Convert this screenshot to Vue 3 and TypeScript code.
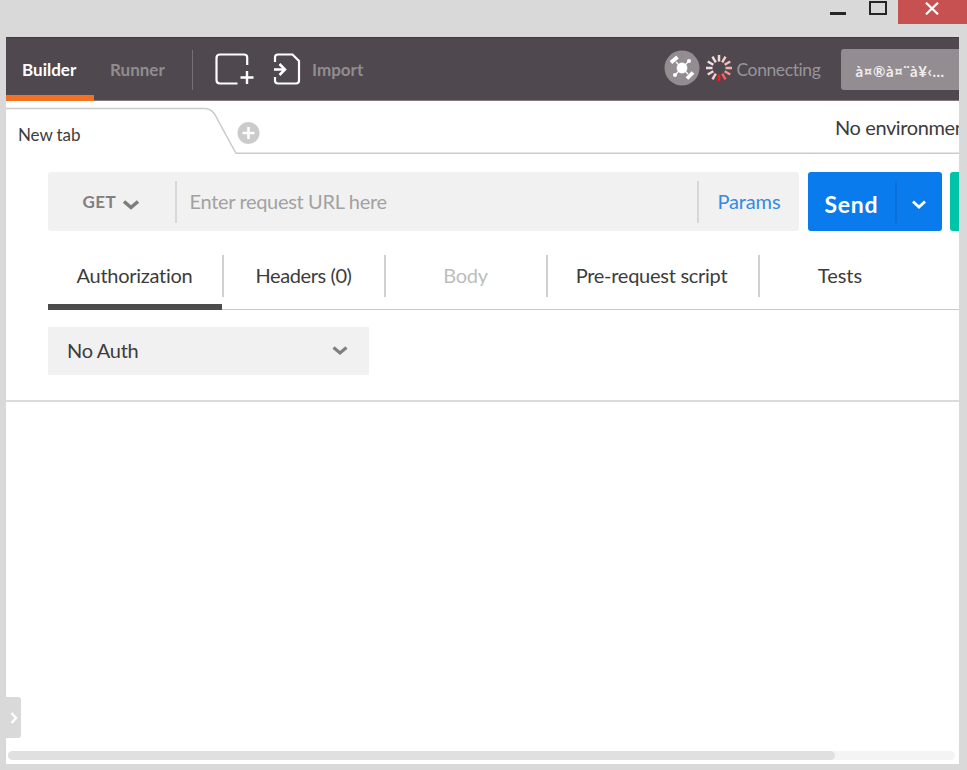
<script setup lang="ts">
import { ref } from 'vue'

interface Tab {
  label: string
  width: number
  cls: string
}

const tabs: Tab[] = [
  { label: 'Authorization', width: 174, cls: 'auth' },
  { label: 'Headers (0)', width: 162, cls: 'headers' },
  { label: 'Body', width: 162, cls: 'body' },
  { label: 'Pre-request script', width: 212, cls: 'script' },
  { label: 'Tests', width: 163, cls: 'tests' },
]
const active = ref(0)

const spokeColors = ['#ff1a1a', '#f3cccc', '#efd6d6', '#f2dede', '#f2e0e0', '#f0dede', '#f5d8d8', '#f7cccc', '#f5c0c0', '#f5b0b0', '#f49494', '#f06060']
const spokes = spokeColors.map((color, i) => ({ angle: 180 + i * 30, color }))
</script>

<template>
  <div class="window">
    <div class="titlebar">
      <svg class="min" width="16" height="16"><rect y="12" width="16" height="3" fill="#252525" /></svg>
      <svg class="max" width="18" height="16"><rect x="1" y="2" width="16" height="12" fill="none" stroke="#252525" stroke-width="2" /></svg>
      <div class="close">
        <svg width="14" height="13" viewBox="0 0 14 13"><path d="M1 .7 13 12.3M13 .7 1 12.3" stroke="#fff" stroke-width="2.200" /></svg>
      </div>
    </div>

    <div class="app">
      <header class="header">
        <div class="nav selected"><span class="t-builder">Builder</span></div>
        <div class="nav"><span class="t-runner">Runner</span></div>
        <i class="nav-line"></i>
        <svg class="new-icon" width="40" height="34" viewBox="0 0 40 34" fill="none" stroke="#fff" stroke-width="2.200">
          <path d="M22.500 30.500H5Q1.500 30.500 1.500 27V5Q1.500 1.500 5 1.500H29Q32.200 1.500 32.200 4.500V12" />
          <path d="M25.500 24.500H38.500M32 18V31" stroke-width="2.400" />
        </svg>
        <svg class="import-icon" width="28" height="34" viewBox="0 0 28 34" fill="none" stroke="#fff" stroke-width="2.200">
          <path d="M2 9V4.500Q2 1.500 5 1.500H19.500L26 8V27.500Q26 30.500 23 30.500H5Q2 30.500 2 27.500V24" />
          <path d="M1 16.500H11.500M6.500 11 12 16.500 6.500 22" stroke-width="2.500" />
        </svg>
        <span class="t-import">Import</span>
        <svg class="intercept" width="36" height="36" viewBox="0 0 36 36">
          <circle cx="18" cy="18" r="17.500" fill="#938d92" />
          <path d="M12 12 24 24M12 24 24 12" stroke="#fff" stroke-width="1.300" />
          <circle cx="18" cy="18" r="5.400" fill="#fff" />
          <circle cx="25" cy="11" r="2" fill="#fff" />
          <circle cx="11" cy="25" r="2" fill="#fff" />
          <path d="M7 12.500 13.500 7M23 28.500 29 22.500" stroke="#fff" stroke-width="3.800" />
        </svg>
        <svg class="spinner" width="28" height="28" viewBox="-14 -14 28 28">
          <line v-for="s in spokes" :key="s.angle" y1="-6.500" y2="-13" :stroke="s.color" stroke-width="2.500" :transform="`rotate(${s.angle})`" />
        </svg>
        <span class="t-conn">Connecting</span>
        <div class="user"><span class="t-user">à¤®à¤¨à¥‹…</span></div>
      </header>

      <div class="tabstrip">
        <svg class="tab-outline" width="953" height="53" viewBox="0 0 953 53" fill="none">
          <path d="M0 7.500H198Q205 7.500 208.500 13L230 52.300H953" stroke="#cbcbcb" stroke-width="1.500" />
          <circle cx="242.500" cy="32" r="11" fill="#cbcbcb" />
          <path d="M236.500 32H248.500M242.500 26V38" stroke="#fff" stroke-width="2.600" />
        </svg>
        <span class="t-newtab">New tab</span>
        <span class="t-env">No environment</span>
      </div>

      <div class="request">
        <div class="urlbar">
          <div class="method">
            <span class="t-get">GET</span>
            <svg width="18" height="12" viewBox="0 0 18 12"><path d="M2 2.500 9 8.500 16 2.500" fill="none" stroke="#7d7d7d" stroke-width="3.600" /></svg>
          </div>
          <div class="url"><span class="t-url">Enter request URL here</span></div>
          <div class="params"><span class="t-params">Params</span></div>
        </div>
        <div class="send">
          <div class="send-main"><span class="t-send">Send</span></div>
          <div class="send-more">
            <svg width="16" height="11" viewBox="0 0 16 11"><path d="M2 2.500 8 8 14 2.500" fill="none" stroke="#fff" stroke-width="2.800" /></svg>
          </div>
        </div>
        <div class="save"></div>
      </div>

      <nav class="tabs">
        <div v-for="(t, i) in tabs" :key="t.cls" class="tab" :class="{ active: i === active, dim: t.cls === 'body' }" :style="{ width: t.width + 'px' }" @click="active = i">
          <div class="tab-cell"><span :class="'t-' + t.cls">{{ t.label }}</span></div>
        </div>
      </nav>

      <div class="auth-pane">
        <div class="select">
          <span class="t-noauth">No Auth</span>
          <svg width="16" height="11" viewBox="0 0 16 11"><path d="M1.500 2.500 8 8 14.500 2.500" fill="none" stroke="#808080" stroke-width="3.200" /></svg>
        </div>
      </div>

      <div class="response">
        <div class="handle">
          <svg width="8" height="12" viewBox="0 0 8 12"><path d="M1.500 1 6 6 1.500 11" fill="none" stroke="#fff" stroke-width="2.400" /></svg>
        </div>
        <div class="track"><div class="thumb"></div></div>
      </div>
    </div>
  </div>
</template>

<style>
body { margin: 0; background: #d9d9d9; overflow: hidden; }
</style>

<style scoped>
* { box-sizing: border-box; }
.window { width: 967px; height: 770px; background: #d9d9d9; font-family: Lato, sans-serif; font-variant-ligatures: none; color: #3c3c3c; overflow: hidden; }
span { white-space: nowrap; flex: none; line-height: 24px; }
svg { display: block; flex: none; }
.titlebar { height: 37px; display: flex; align-items: flex-start; justify-content: flex-end; }
.min { margin-right: 23px; }
.max { margin-right: 11px; }
.close { width: 69px; height: 24px; background: #c75050; display: flex; padding: 2px 0 0 27px; }
.app { width: 953px; height: 727px; margin-left: 5.5px; background: #fff; overflow: hidden; display: flex; flex-direction: column; }
.header { height: 64px; flex: none; background: #4f484e; border-top: 1px solid #413b40; border-bottom: 1px solid #817b80; display: flex; align-items: flex-start; }
.nav { height: 63px; width: 88px; padding: 20px 0 0 16.5px; font-weight: 700; font-size: 17px; color: #908d90; flex: none; }
.nav.selected { color: #fff; border-bottom: 6px solid #f47023; }
.nav-line { width: 1px; height: 40px; margin: 12px 0 0 10px; background: #777176; flex: none; }
.new-icon { margin: 15px 0 0 22px; }
.import-icon { margin: 15px 0 0 18px; }
.t-import { margin: 20px 0 0 11.5px; width: 351.5px; font-size: 17px; font-weight: 700; color: #908d90; }
.intercept { margin-top: 12px; }
.spinner { margin: 16px 0 0 5px; }
.t-conn { margin: 20px 0 0 4px; width: 104px; font-size: 17.500px; letter-spacing: -.4px; color: #98959a; }
.user { width: 130px; flex: none; height: 41px; margin-top: 11px; border-radius: 3px; background: #938d92; color: #eee; padding: 10px 0 0 15px; font-size: 15px; font-weight: 700; letter-spacing: .6px; }
.tabstrip { height: 53px; flex: none; position: relative; display: flex; font-size: 17px; }
.tab-outline { position: absolute; left: 0; top: 0; }
.t-newtab { margin: 22px 0 0 12.5px; width: 817px; letter-spacing: -.1px; }
.t-env { margin-top: 14px; font-size: 20px; letter-spacing: -.4px; }
.request { display: flex; margin: 18px 0 0 42px; height: 59px; flex: none; font-size: 20px; }
.urlbar { width: 751.5px; background: #f1f1f1; border-radius: 3px; display: flex; align-items: center; flex: none; }
.method { width: 129px; height: 42px; border-right: 2px solid #d8d8d8; display: flex; align-items: center; padding-left: 35px; }
.method svg { margin: 6px 0 0 6px; }
.t-get { font-size: 17px; font-weight: 700; color: #808080; letter-spacing: .4px; }
.url { width: 522px; height: 42px; padding: 8px 0 0 13px; color: #a2a2a2; border-right: 2px solid #d8d8d8; }
.t-url { letter-spacing: -.33px; }
.params { padding: 0 0 2px 19px; color: #328be6; letter-spacing: -.15px; }
.send { width: 134px; flex: none; margin-left: 9px; border-radius: 3px; background: #097bed; display: flex; align-items: center; color: #fff; }
.send-main { width: 89px; height: 42px; padding: 11px 0 0 16.5px; border-right: 2px solid #0a6fd8; }
.t-send { font-size: 23px; font-weight: 700; letter-spacing: .7px; }
.send-more { padding: 6px 0 0 14px; }
.save { width: 60px; flex: none; margin-left: 8px; border-radius: 3px; background: #00c4a7; }
.tabs { height: 79px; flex: none; margin-left: 42px; display: flex; border-bottom: 1px solid #c9c9c9; font-size: 20px; }
.tab { height: 79px; flex: none; padding-top: 24px; }
.tab-cell { height: 42px; display: flex; justify-content: center; padding-top: 8px; border-right: 2px solid #d0d0d0; margin-right: -2px; letter-spacing: -.27px; }
.tab:last-child .tab-cell { border-right: 0; letter-spacing: 0; }
.t-headers { margin-left: 2px; letter-spacing: -.4px; }
.t-body { margin-left: 2px; }
.tab.active { border-bottom: 6px solid #4c4c4c; }
.tab.dim { color: #bdbdbd; }
.auth-pane { height: 92px; flex: none; border-bottom: 2px solid #dbdbdb; padding: 17px 0 0 42px; }
.select { width: 321px; height: 48px; background: #f1f1f1; font-size: 20px; display: flex; align-items: center; justify-content: space-between; padding: 0 21px 2px 19.5px; letter-spacing: -.3px; }
.response { flex: 1; display: flex; flex-direction: column; justify-content: flex-end; }
.handle { width: 15px; height: 41px; background: #d9d9d9; border-radius: 0 3px 3px 0; margin-bottom: 13px; display: flex; align-items: center; padding-left: 4px; }
.track { width: 947px; height: 9px; margin: 0 0 4px 2.5px; background: #f4f4f4; border-radius: 5px; }
.thumb { width: 827px; height: 9px; background: #e0e0e0; border-radius: 5px; }
</style>
